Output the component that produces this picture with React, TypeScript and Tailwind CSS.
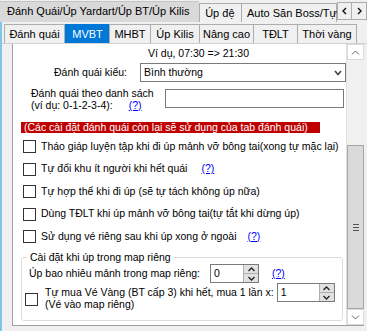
import React from "react";

const font = { fontFamily: '"Liberation Sans", Arial, sans-serif' };

const Check = ({ className = "" }: { className?: string }) => (
  <div className={`w-[13px] h-[13px] border border-[#333] bg-white shrink-0 ${className}`} />
);

const Help = ({ className = "" }: { className?: string }) => (
  <span className={`text-[#0000ff] underline ${className}`}>(?)</span>
);

const Spin = ({ value, w }: { value: string; w: string }) => (
  <div className={`flex h-[19px] border border-[#7a7a7a] bg-white ${w}`}>
    <div className="flex-1 pl-[3px] leading-[17px]">{value}</div>
    <div className="flex flex-col w-[15px] bg-[#e1e1e1] border-l border-[#adadad]">
      <div className="flex-1 flex items-center justify-center border-b border-[#adadad]">
        <svg width="7" height="5" viewBox="0 0 7 5"><path d="M0.5 4 L3.5 1 L6.5 4" stroke="#222" strokeWidth="1.3" fill="none" /></svg>
      </div>
      <div className="flex-1 flex items-center justify-center">
        <svg width="7" height="5" viewBox="0 0 7 5"><path d="M0.5 1 L3.5 4 L6.5 1" stroke="#222" strokeWidth="1.3" fill="none" /></svg>
      </div>
    </div>
  </div>
);

const subTabs = [
  { name: "Đánh quái", w: "w-[61px]" },
  { name: "MVBT", w: "w-[45px]", active: true },
  { name: "MHBT", w: "w-[42px]" },
  { name: "Úp Kilis", w: "w-[50px]" },
  { name: "Nâng cao", w: "w-[55px]" },
  { name: "TĐLT", w: "w-[45px]" },
  { name: "Thời vàng", w: "w-[60px]" },
];

const checks = [
  "Tháo giáp luyện tập khi đi úp mảnh vỡ bông tai(xong tự mặc lại)",
  "Tự đổi khu ít người khi hết quái",
  "Tự hợp thể khi đi úp (sẽ tự tách không úp nữa)",
  "Dùng TĐLT khi úp mảnh vỡ bông tai(tự tắt khi dừng úp)",
  "Sử dụng vé riêng sau khi úp xong ở ngoài",
];

export default function App() {
  return (
    <div className="w-[367px] h-[331px] bg-[#f0f0f0] text-[10.5px] text-black overflow-hidden flex flex-col" style={font}>
      {/* hàng tab trên */}
      <div className="h-[22px] flex items-end shrink-0">
        <div className="h-[21px] w-[200px] bg-[#d9d9d9] border-t border-[#c4c4c4] pl-[7px] text-[11px] leading-[19px] whitespace-nowrap overflow-hidden">
          Đánh Quái/Úp Yardart/Úp BT/Úp Kilis
        </div>
        <div className="h-[19px] w-[43px] border border-[#adadad] border-b-0 pl-[5px] text-[11px] leading-[18px]">Úp đệ</div>
        <div className="h-[19px] w-[95px] border-r border-t border-[#adadad] pl-[5px] text-[11px] leading-[18px] whitespace-nowrap">Auto Săn Boss/Tự</div>
        <div className="self-start mt-[2px] flex">
          <div className="w-[15px] h-[18px] border border-[#adadad] bg-[#f0f0f0] flex items-center justify-center">
            <svg width="5" height="8" viewBox="0 0 5 8"><path d="M4 1 L1 4 L4 7" stroke="#111" strokeWidth="1.4" fill="none" /></svg>
          </div>
          <div className="w-[15px] h-[18px] border border-l-0 border-[#adadad] bg-[#f0f0f0] flex items-center justify-center">
            <svg width="5" height="8" viewBox="0 0 5 8"><path d="M1 1 L4 4 L1 7" stroke="#111" strokeWidth="1.4" fill="none" /></svg>
          </div>
        </div>
      </div>

      <div className="flex-1 flex flex-col border-l-2 border-[#7cc6ec] min-h-0">
        {/* hàng tab dưới */}
        <div className="h-[21px] flex items-end pl-[2px] shrink-0 text-[11px]">
          {subTabs.map((t) => (
            <div
              key={t.name}
              className={`h-[19px] ${t.w} text-center leading-[18px] whitespace-nowrap border border-b-0 ${
                t.active ? "bg-[#0078d7] text-white border-[#0078d7]" : "border-[#adadad] -ml-px first:ml-0"
              }`}
            >
              {t.name}
            </div>
          ))}
        </div>

        <div className="flex-1 flex border-t border-[#d0d0d0] pl-[10px] pr-[4px] pb-[5px] min-h-0">
          <div className="flex-1 flex border-l border-[#a0a0a0] border-b bg-white min-h-0">
            {/* nội dung */}
            <div className="flex-1 flex flex-col pl-[4px] pt-[3px]">
              <div className="pl-[131px] leading-[13px]">Ví dụ, 07:30 =&gt; 21:30</div>

              <div className="flex items-center mt-[3px]">
                <div className="w-[110px] text-right">Đánh quái kiểu:</div>
                <div className="ml-[13px] w-[206px] h-[19px] border border-[#7a7a7a] flex items-center justify-between px-[3px]">
                  <span>Bình thường</span>
                  <svg width="8" height="6" viewBox="0 0 8 6"><path d="M1 1 L4 4.5 L7 1" stroke="#444" strokeWidth="1.6" fill="none" /></svg>
                </div>
              </div>

              <div className="flex items-start mt-[5px]">
                <div className="pl-[14px] leading-[12px]">
                  <div>Đánh quái theo danh sách</div>
                  <div className="flex">
                    <span>(ví dụ: 0-1-2-3-4):</span>
                    <Help className="ml-[16px]" />
                  </div>
                </div>
                <div className="ml-auto mr-[2px] mt-[2px] w-[179px] h-[19px] border border-[#7a7a7a]" />
              </div>

              <div className="mt-[11px] ml-[4px] w-[299px] h-[11px] bg-[#c00000] text-white leading-[11px] pl-[3px] whitespace-nowrap">
                (Các cài đặt đánh quái còn lại sẽ sử dụng của tab đánh quái)
              </div>

              <div className="flex flex-col mt-[7px] ml-[6px] gap-[9.5px]">
                {checks.map((c, i) => (
                  <div key={c} className="flex items-center h-[13px] whitespace-nowrap">
                    <Check />
                    <span className="ml-[5px]">{c}</span>
                    {i === 1 && <Help className="ml-[14px]" />}
                    {i === 4 && <Help className="ml-[11px]" />}
                  </div>
                ))}
              </div>

              <div className="relative mt-[14px] ml-[4px] w-[322px] h-[64px] border border-[#dcdcdc] rounded-[3px]">
                <div className="absolute -top-[7px] left-[5px] bg-white px-[3px] leading-[12px]">Cài đặt khi úp trong map riêng</div>
                <div className="flex items-center mt-[6px] pl-[7px]">
                  <span>Úp bao nhiêu mảnh trong map riêng:</span>
                  <div className="ml-[10px]"><Spin value="0" w="w-[49px]" /></div>
                  <Help className="ml-[13px]" />
                </div>
                <div className="flex items-center pl-[3px]">
                  <Check className="mt-[6px]" />
                  <div className="ml-[7px] leading-[12px] mt-[3px] whitespace-nowrap">
                    <div>Tự mua Vé Vàng (BT cấp 3) khi hết, mua 1 lần x:</div>
                    <div>(Vé vào map riêng)</div>
                  </div>
                  <div className="ml-[3px] self-start"><Spin value="1" w="w-[58px]" /></div>
                </div>
              </div>
            </div>

            {/* thanh cuộn */}
            <div className="w-[18px] flex flex-col bg-[#f0f0f0] border-l border-[#e0e0e0]">
              <div className="h-[16px] bg-white border border-[#dadada] flex items-center justify-center">
                <svg width="9" height="5" viewBox="0 0 9 5"><path d="M1 4.5 L4.5 1 L8 4.5" stroke="#606060" strokeWidth="1" fill="none" /></svg>
              </div>
              <div className="h-[85px] bg-[#f0f0f0]" />
              <div className="flex-1 bg-[#dadada] border border-[#a6a6a6] flex items-center justify-center">
                <div className="flex flex-col gap-[2px] w-[6px]">
                  <div className="h-px bg-[#555]" />
                  <div className="h-px bg-[#555]" />
                  <div className="h-px bg-[#555]" />
                </div>
              </div>
              <div className="h-[16px] bg-white border border-[#dadada] flex items-center justify-center">
                <svg width="9" height="5" viewBox="0 0 9 5"><path d="M1 0.5 L4.5 4 L8 0.5" stroke="#606060" strokeWidth="1" fill="none" /></svg>
              </div>
            </div>
          </div>
        </div>
      </div>
    </div>
  );
}
